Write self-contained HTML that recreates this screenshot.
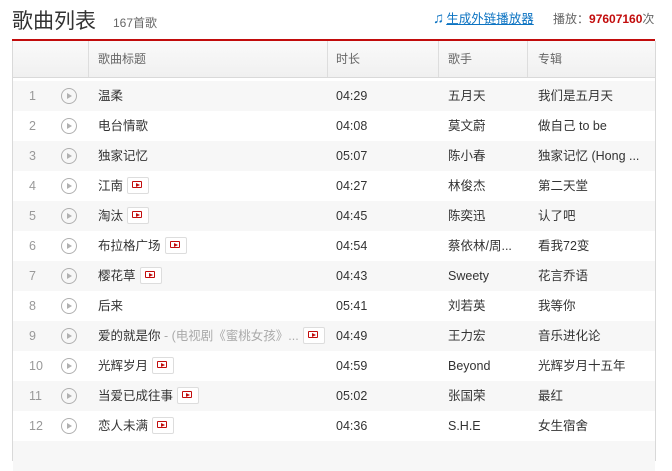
<!DOCTYPE html><html><head><meta charset="utf-8"><style>
body{margin:0;width:672px;height:450px;overflow:hidden;background:#fff;font-family:"Liberation Sans","Noto Sans CJK SC",sans-serif;color:#333}
.h{position:absolute;left:12px;top:9px;font-size:21px;line-height:26px;color:#333}
.cnt{position:absolute;left:113px;top:15px;font-size:12px;line-height:16px;color:#666}
.link{position:absolute;left:433px;top:11px;font-size:12.5px;line-height:16px;color:#0c73c2;text-decoration:underline}
.link b{font-size:15px;text-decoration:none;display:inline-block;margin-right:2px}
.play{position:absolute;left:553px;top:11px;font-size:12px;line-height:16px;color:#666;white-space:nowrap}
.play b{color:#c20c0c}
.red{position:absolute;left:12px;top:39px;width:643px;height:2px;background:#c20c0c}
.tb{position:absolute;left:12px;top:41px;width:642px;border-left:1px solid #d9d9d9;border-right:1px solid #d9d9d9;height:420px}
.hd{height:36px;background:linear-gradient(#fafafa,#f0f0f0);border-bottom:1px solid #d9d9d9;position:relative;font-size:12px;color:#666}
.hd span{position:absolute;top:0;line-height:36px}
.hd i{position:absolute;top:0;width:1px;height:36px;background:#ddd}
.rows{padding-top:3px}
.r{height:30px;position:relative;font-size:12.5px;color:#333}
.r:nth-child(odd){background:#f7f7f7}
.r span{position:absolute;top:0;line-height:30px;white-space:nowrap}
.n{left:16px;color:#999}
.pc{position:absolute;left:48px;top:7px;width:16px;height:16px;border:1.5px solid #b0b0b0;border-radius:50%;box-sizing:border-box}
.pc:after{content:"";position:absolute;left:5px;top:3.5px;border-left:5px solid #b0b0b0;border-top:3px solid transparent;border-bottom:3px solid transparent}
.mv{display:inline-block;vertical-align:middle;width:20px;height:15px;border:1px solid #ddd;border-radius:2px;margin-left:4px;position:relative;background:#fff;top:-1px}
.mv:after{content:"";position:absolute;left:4px;top:3px;width:10px;height:7px;border:1.5px solid #c20c0c;box-sizing:border-box;border-radius:1px}
.mv:before{content:"";position:absolute;left:8px;top:5px;border-left:4px solid #c20c0c;border-top:2px solid transparent;border-bottom:2px solid transparent;z-index:1}
.t{left:85px}.d{left:323px}.s{left:435px}.a{left:525px}
.g{color:#aaa}
</style></head><body>
<div class="h">歌曲列表</div><div class="cnt">167首歌</div>
<div class="link"><b>♫</b>生成外链播放器</div>
<div class="play">播放：<b>97607160</b>次</div>
<div class="red"></div>
<div class="tb">
<div class="hd"><i style="left:75px"></i><span style="left:85px">歌曲标题</span><i style="left:314px"></i><span style="left:323px">时长</span><i style="left:425px"></i><span style="left:435px">歌手</span><i style="left:514px"></i><span style="left:525px">专辑</span></div>
<div class="rows">
<div class="r"><span class="n">1</span><i class="pc"></i><span class="t">温柔</span><span class="d">04:29</span><span class="s">五月天</span><span class="a">我们是五月天</span></div>
<div class="r"><span class="n">2</span><i class="pc"></i><span class="t">电台情歌</span><span class="d">04:08</span><span class="s">莫文蔚</span><span class="a">做自己 to be</span></div>
<div class="r"><span class="n">3</span><i class="pc"></i><span class="t">独家记忆</span><span class="d">05:07</span><span class="s">陈小春</span><span class="a">独家记忆 (Hong ...</span></div>
<div class="r"><span class="n">4</span><i class="pc"></i><span class="t">江南<i class="mv"></i></span><span class="d">04:27</span><span class="s">林俊杰</span><span class="a">第二天堂</span></div>
<div class="r"><span class="n">5</span><i class="pc"></i><span class="t">淘汰<i class="mv"></i></span><span class="d">04:45</span><span class="s">陈奕迅</span><span class="a">认了吧</span></div>
<div class="r"><span class="n">6</span><i class="pc"></i><span class="t">布拉格广场<i class="mv"></i></span><span class="d">04:54</span><span class="s">蔡依林/周...</span><span class="a">看我72变</span></div>
<div class="r"><span class="n">7</span><i class="pc"></i><span class="t">樱花草<i class="mv"></i></span><span class="d">04:43</span><span class="s">Sweety</span><span class="a">花言乔语</span></div>
<div class="r"><span class="n">8</span><i class="pc"></i><span class="t">后来</span><span class="d">05:41</span><span class="s">刘若英</span><span class="a">我等你</span></div>
<div class="r"><span class="n">9</span><i class="pc"></i><span class="t">爱的就是你 <span class="g" style="position:static">- (电视剧《蜜桃女孩》...</span><i class="mv"></i></span><span class="d">04:49</span><span class="s">王力宏</span><span class="a">音乐进化论</span></div>
<div class="r"><span class="n">10</span><i class="pc"></i><span class="t">光辉岁月<i class="mv"></i></span><span class="d">04:59</span><span class="s">Beyond</span><span class="a">光辉岁月十五年</span></div>
<div class="r"><span class="n">11</span><i class="pc"></i><span class="t">当爱已成往事<i class="mv"></i></span><span class="d">05:02</span><span class="s">张国荣</span><span class="a">最红</span></div>
<div class="r"><span class="n">12</span><i class="pc"></i><span class="t">恋人未满<i class="mv"></i></span><span class="d">04:36</span><span class="s">S.H.E</span><span class="a">女生宿舍</span></div>
<div class="r"></div>
</div></div>
</body></html>
